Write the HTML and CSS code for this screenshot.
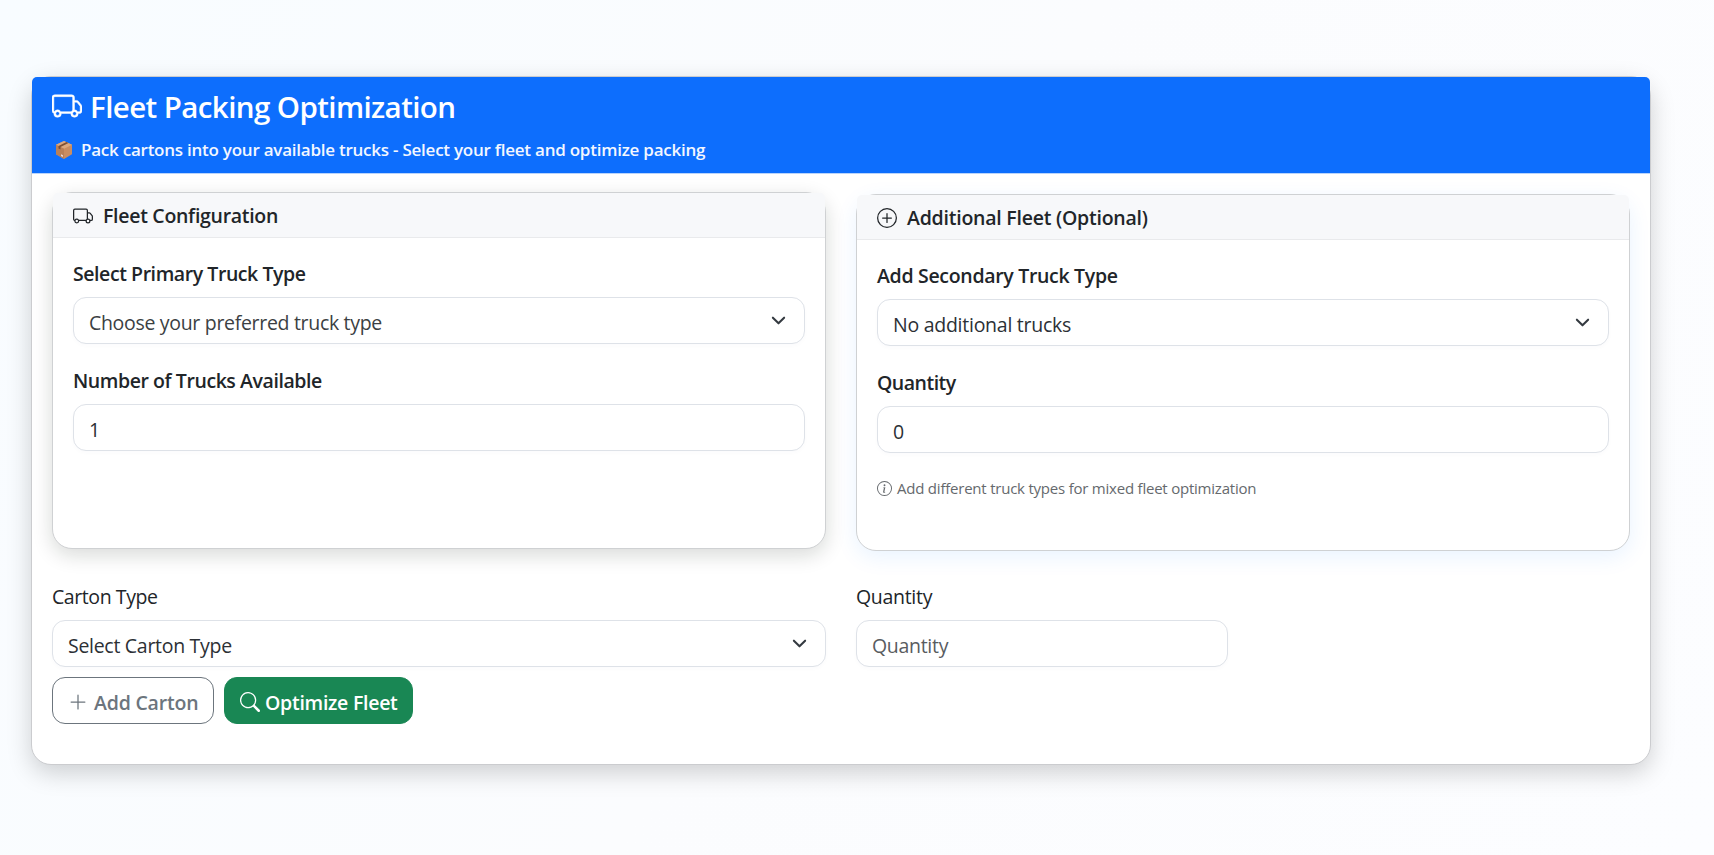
FILE: index.html
```html
<!DOCTYPE html>
<html lang="en">
<head>
<meta charset="utf-8">
<title>Fleet Packing Optimization</title>
<link rel="stylesheet" href="styles.css">
</head>
<body>
<svg width="0" height="0" class="sprite" aria-hidden="true">
  <symbol id="truck" viewBox="0 0 16 16"><path d="M0 3.5A1.5 1.5 0 0 1 1.5 2h9A1.5 1.5 0 0 1 12 3.5V5h1.02a1.5 1.5 0 0 1 1.17.563l1.481 1.85a1.5 1.5 0 0 1 .329.938V10.5a1.5 1.5 0 0 1-1.5 1.5H14a2 2 0 1 1-4 0H5a2 2 0 1 1-3.998-.085A1.5 1.5 0 0 1 0 10.5zm1.294 7.456A2 2 0 0 1 4.732 11h5.536a2 2 0 0 1 .732-.732V3.5a.5.5 0 0 0-.5-.5h-9a.5.5 0 0 0-.5.5v7a.5.5 0 0 0 .294.456M12 10a2 2 0 0 1 1.732 1h.768a.5.5 0 0 0 .5-.5V8.35a.5.5 0 0 0-.11-.312l-1.48-1.85A.5.5 0 0 0 13.02 6H12zm-9 1a1 1 0 1 0 0 2 1 1 0 0 0 0-2m9 0a1 1 0 1 0 0 2 1 1 0 0 0 0-2"/></symbol>
  <symbol id="chevron" viewBox="0 0 16 16"><path fill="none" stroke="#343a40" stroke-linecap="round" stroke-linejoin="round" stroke-width="2.2" d="m2 5 6 6 6-6"/></symbol>
</svg>
<main class="card">
  <header class="card-top">
    <h1 class="title"><svg class="i30"><use href="#truck"/></svg><span class="t-title">Fleet Packing Optimization</span></h1>
    <p class="subtitle">
      <svg class="box" viewBox="0 0 18 18"><path fill="#c98d62" d="M9 0l8 3.700v9.600L9 18l-8-4.700V3.700z"/><path fill="#dba87f" d="M9 0l8 3.700L9 7.700 1 3.700z"/><path fill="#b98058" d="M1 3.700l8 4V18l-8-4.700z"/><path fill="#7c4f35" d="M11.500 1.100l2 .9-8 4v2.600l-2-1V5z"/><path fill="#e9d6d8" d="M6 13.300l2 1v1.700l-2-1z"/></svg>
      <span class="t-sub">Pack cartons into your available trucks - Select your fleet and optimize packing</span>
    </p>
  </header>
  <div class="content">
    <div class="grid">
      <section class="panel primary">
        <h2 class="panel-head"><svg class="i20"><use href="#truck"/></svg><span class="t-fc">Fleet Configuration</span></h2>
        <div class="panel-body">
          <div class="label bold"><span class="t-l1">Select Primary Truck Type</span></div>
          <div class="field soft"><span class="t-s1">Choose your preferred truck type</span><svg class="chev"><use href="#chevron"/></svg></div>
          <div class="label bold next"><span class="t-l2">Number of Trucks Available</span></div>
          <div class="field"><span>1</span></div>
        </div>
      </section>
      <section class="panel extra">
        <h2 class="panel-head"><svg class="i20" viewBox="0 0 16 16"><path d="M8 15A7 7 0 1 1 8 1a7 7 0 0 1 0 14m0 1A8 8 0 1 0 8 0a8 8 0 0 0 0 16"/><path d="M8 4a.5.5 0 0 1 .5.5v3h3a.5.5 0 0 1 0 1h-3v3a.5.5 0 0 1-1 0v-3h-3a.5.5 0 0 1 0-1h3v-3A.5.5 0 0 1 8 4"/></svg><span class="t-af">Additional Fleet (Optional)</span></h2>
        <div class="panel-body">
          <div class="label bold"><span class="t-l3">Add Secondary Truck Type</span></div>
          <div class="field"><span class="t-s2">No additional trucks</span><svg class="chev"><use href="#chevron"/></svg></div>
          <div class="label bold next"><span class="t-l4">Quantity</span></div>
          <div class="field"><span>0</span></div>
          <div class="note"><svg class="i15" viewBox="0 0 16 16"><path d="M8 15A7 7 0 1 1 8 1a7 7 0 0 1 0 14m0 1A8 8 0 1 0 8 0a8 8 0 0 0 0 16"/><path d="m8.930 6.588-2.290.287-.082.380.450.083c.294.070.352.176.288.469l-.738 3.468c-.194.897.105 1.319.808 1.319.545 0 1.178-.252 1.465-.598l.088-.416c-.200.176-.492.246-.686.246-.275 0-.375-.193-.304-.533zM9 4.500a1 1 0 1 1-2 0 1 1 0 0 1 2 0"/></svg><span class="t-note">Add different truck types for mixed fleet optimization</span></div>
        </div>
      </section>
    </div>
    <div class="grid carton">
      <div>
        <div class="label"><span class="t-ct">Carton Type</span></div>
        <div class="field"><span class="t-sct">Select Carton Type</span><svg class="chev"><use href="#chevron"/></svg></div>
      </div>
      <div>
        <div class="label"><span class="t-q">Quantity</span></div>
        <div class="field short placeholder"><span class="t-q">Quantity</span></div>
      </div>
    </div>
    <div class="actions">
      <div class="btn outline"><svg class="i20" viewBox="0 0 16 16"><path d="M8 2a.5.5 0 0 1 .5.5v5h5a.5.5 0 0 1 0 1h-5v5a.5.5 0 0 1-1 0v-5h-5a.5.5 0 0 1 0-1h5v-5A.5.5 0 0 1 8 2"/></svg><span class="t-ac">Add Carton</span></div>
      <div class="btn solid"><svg class="i20" viewBox="0 0 16 16"><path d="M11.742 10.344a6.500 6.500 0 1 0-1.397 1.398h-.001q.044.060.098.115l3.850 3.850a1 1 0 0 0 1.415-1.414l-3.850-3.850a1 1 0 0 0-.115-.100zM12 6.500a5.500 5.500 0 1 1-11 0 5.500 5.500 0 0 1 11 0"/></svg><span class="t-of">Optimize Fleet</span></div>
    </div>
  </div>
</main>
</body>
</html>
```
FILE: styles.css
```css
* { box-sizing: border-box; }
body {
  margin: 0;
  padding: 76px 63px 0 31px;
  height: 855px;
  overflow: hidden;
  background: linear-gradient(120deg, #f8fcff 0%, #fbfcfe 50%, #fcfdff 100%);
  font-family: "Open Sans", "Noto Sans", sans-serif;
  font-size: 19.5px;
  color: #212529;
}
h1, h2, p { margin: 0; }
svg { fill: currentColor; flex: none; display: block; }
span { white-space: nowrap; }
.sprite { position: absolute; }
.card {
  height: 689px;
  border: 1px solid #cbcccf;
  border-radius: 20px;
  background: #fff;
  box-shadow: 0 8px 25px rgba(0, 0, 0, .18);
}
.card-top {
  height: 97px;
  padding: 12px 20px 0;
  background: #0d6efd;
  border-bottom: 1px solid #b9d4fb;
  border-radius: 5px 5px 0 0;
  color: #fff;
}
.title { display: flex; align-items: center; gap: 8px; height: 34px; font-size: 29.5px; font-weight: 600; }
.subtitle { display: flex; align-items: center; gap: 8px; height: 26px; margin-top: 13px; padding-left: 3px; font-size: 17px; font-weight: 600; color: #f3f7ff; }
.i30 { width: 30px; height: 30px; stroke: currentColor; stroke-width: .25; overflow: visible; }
.i20 { width: 20px; height: 20px; }
.i15 { width: 15px; height: 15px; }
.box { width: 18px; height: 18px; margin-top: 1px; }
.content { padding: 18px 20px 0; }
.grid { display: grid; grid-template-columns: 774px 774px; column-gap: 30px; align-items: start; }
.panel { height: 357px; border: 1px solid #cfd1d3; border-radius: 20px; background: #fff; }
.primary { box-shadow: 0 6px 20px rgba(10, 25, 15, .16); }
.extra { margin-top: 2px; box-shadow: 0 6px 22px rgba(0, 123, 255, .09); }
.panel-head {
  display: flex;
  align-items: center;
  gap: 10px;
  height: 45px;
  padding: 0 20px;
  background: #f7f8fa;
  border-bottom: 1px solid #e9eaec;
  border-radius: 5px 5px 0 0;
  font-size: 19.5px;
  font-weight: 600;
}
.panel-head svg { margin-top: 2px; }
.panel-body { padding: 21px 20px 0; }
.label { height: 30px; line-height: 30px; }
.bold { font-weight: 600; }
.next { margin-top: 22px; }
.field {
  display: flex;
  align-items: center;
  justify-content: space-between;
  height: 47px;
  margin-top: 8px;
  padding: 3px 15px 0;
  border: 1px solid #dee2e8;
  border-radius: 13px;
  background: #fff;
  box-shadow: 0 2px 4px rgba(0, 40, 80, .02);
  color: #2c3035;
}
.soft { color: #3b3f43; }
.chev { width: 15px; height: 15px; margin: -3px 3px 0 0; }
.note { display: flex; align-items: center; gap: 5px; height: 22px; margin-top: 24px; font-size: 15px; color: #65696d; }
.carton { margin-top: 31px; }
.short { width: 372px; }
.placeholder { color: #595c5f; }
.actions { display: flex; gap: 10px; margin-top: 10px; }
.btn { display: flex; align-items: center; height: 47px; padding: 3px 15px 0; border: 1px solid #6c757d; border-radius: 13px; font-weight: 600; }
.outline { width: 162px; gap: 6px; color: #6c757d; }
.solid { width: 189px; gap: 5px; color: #fff; background: #198754; border-color: #198754; }

/* Per-label tracking */
.t-title { letter-spacing: -.59px; }
.t-sub { letter-spacing: -.24px; }
.t-fc { letter-spacing: -.29px; }
.t-l1 { letter-spacing: -.43px; }
.t-s1 { letter-spacing: -.31px; }
.t-l2 { letter-spacing: -.43px; }
.t-af { letter-spacing: -.23px; }
.t-l3 { letter-spacing: -.31px; }
.t-s2 { letter-spacing: -.26px; }
.t-l4 { letter-spacing: -.5px; }
.t-note { letter-spacing: -.22px; }
.t-ct { letter-spacing: -.42px; }
.t-sct { letter-spacing: -.29px; }
.t-q { letter-spacing: -.3px; }
.t-ac { letter-spacing: -.2px; }
.t-of { letter-spacing: -.27px; }
```
